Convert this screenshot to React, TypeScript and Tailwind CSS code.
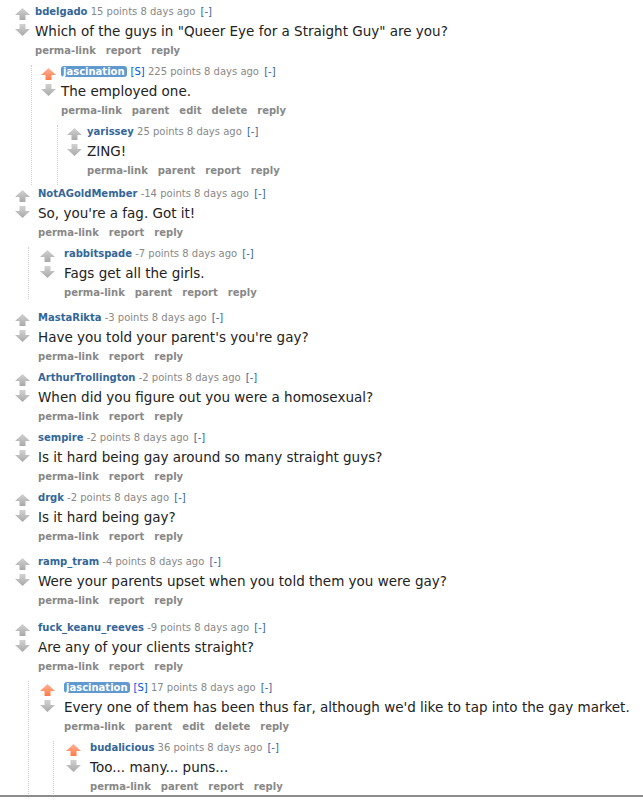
import React from "react";

type Item = {
  user: string;
  points: string;
  body: string;
  op?: boolean;
  up?: boolean;
  buttons?: string[];
  pb?: string;
  children?: Item[];
};

type Thread = { mt: string; tight?: boolean; item: Item };

const topButtons = ["perma-link", "report", "reply"];
const childButtons = ["perma-link", "parent", "report", "reply"];
const opButtons = ["perma-link", "parent", "edit", "delete", "reply"];

// the thread, top to bottom
const threads: Thread[] = [
  {
    mt: "mt-[5px]",
    tight: true,
    item: {
      user: "bdelgado",
      points: "15",
      body: 'Which of the guys in "Queer Eye for a Straight Guy" are you?',
      children: [
        {
          user: "jascination",
          op: true,
          up: true,
          points: "225",
          body: "The employed one.",
          children: [{ user: "yarissey", points: "25", body: "ZING!", pb: "pb-[8px]" }],
        },
      ],
    },
  },
  {
    mt: "mt-[2px]",
    item: {
      user: "NotAGoldMember",
      points: "-14",
      body: "So, you're a fag. Got it!",
      children: [{ user: "rabbitspade", points: "-7", body: "Fags get all the girls." }],
    },
  },
  { mt: "mt-[12px]", item: { user: "MastaRikta", points: "-3", body: "Have you told your parent's you're gay?" } },
  { mt: "mt-[8px]", item: { user: "ArthurTrollington", points: "-2", body: "When did you figure out you were a homosexual?" } },
  { mt: "mt-[8px]", item: { user: "sempire", points: "-2", body: "Is it hard being gay around so many straight guys?" } },
  { mt: "mt-[8px]", item: { user: "drgk", points: "-2", body: "Is it hard being gay?" } },
  { mt: "mt-[12px]", item: { user: "ramp_tram", points: "-4", body: "Were your parents upset when you told them you were gay?" } },
  {
    mt: "mt-[14px]",
    item: {
      user: "fuck_keanu_reeves",
      points: "-9",
      body: "Are any of your clients straight?",
      children: [
        {
          user: "jascination",
          op: true,
          up: true,
          points: "17",
          body: "Every one of them has been thus far, although we'd like to tap into the gay market.",
          children: [{ user: "budalicious", up: true, points: "36", body: "Too... many... puns...", pb: "pb-[1px]" }],
        },
      ],
    },
  },
];

function Arrow({ down, on }: { down?: boolean; on?: boolean }) {
  const id = `g-${down ? "d" : "u"}-${on ? "on" : "off"}`;
  const top = on ? "#ffb399" : "#d2d2d2";
  const bottom = on ? "#ff7a45" : "#a9a9a9";
  return (
    <svg width="15" height="12" viewBox="0 0 15 12" className="block">
      <defs>
        <linearGradient id={id} x1="0" y1={down ? "1" : "0"} x2="0" y2={down ? "0" : "1"}>
          <stop offset="0" stopColor={down ? bottom : top} />
          <stop offset="1" stopColor={down ? top : bottom} />
        </linearGradient>
      </defs>
      {down ? (
        <polygon points="4.5,0 10.5,0 10.5,5 15,5 7.5,12 0,5 4.5,5" fill={`url(#${id})`} />
      ) : (
        <polygon points="7.5,0 15,7 10.5,7 10.5,12 4.5,12 4.5,7 0,7" fill={`url(#${id})`} />
      )}
    </svg>
  );
}

function Comment({ c, depth, tight }: { c: Item; depth: number; tight?: boolean }) {
  const buttons = c.buttons ?? (depth === 0 ? topButtons : c.op ? opButtons : childButtons);
  return (
    <div>
      <div className={`flex ${tight ? "gap-[5px]" : depth === 0 ? "gap-[8px]" : "gap-[9px]"}`}>
        <div className="w-[15px] shrink-0 pt-[3px] flex flex-col gap-[4px]">
          <Arrow on={c.up} />
          <Arrow down />
        </div>
        <div className="min-w-0 flex-1">
          <div className="h-[14px] leading-[14px] text-[10px] text-[#888] whitespace-nowrap">
            {c.op ? (
              <span className="font-bold text-white bg-[#5f99cf] rounded-[3px] px-[2px]">{c.user}</span>
            ) : (
              <span className="font-bold text-[#369]">{c.user}</span>
            )}
            {c.op && <span className="text-[#0055df] ml-[4px]">[S]</span>}
            <span> {c.points} points 8 days ago </span>
            <span className="text-[#369] ml-[2px]">[-]</span>
          </div>
          <div className="h-[24px] leading-[25px] text-[13.5px] text-[#222] whitespace-nowrap">{c.body}</div>
          <div className="h-[14px] leading-[15px] flex gap-[10px] text-[10px] font-bold text-[#888]">
            {buttons.map((b) => (
              <span key={b}>{b}</span>
            ))}
          </div>
          {c.children?.map((k, i) => (
            <div
              key={i}
              className={`mt-[8px] border-l border-dotted border-[#c8c8f0] ${
                tight ? "ml-[-4px] pl-[9px]" : depth === 0 ? "ml-[-10px] pl-[11px]" : "ml-[-11px] pl-[12px]"
              } ${k.pb ?? ""}`}
            >
              <Comment c={k} depth={depth + 1} tight={tight} />
            </div>
          ))}
        </div>
      </div>
    </div>
  );
}

export default function App() {
  return (
    <div className="w-[643px] h-[806px] bg-white overflow-hidden font-['DejaVu_Sans',Verdana,sans-serif]">
      <div className="pl-[15px]">
        {threads.map((t, i) => (
          <div key={i} className={t.mt}>
            <Comment c={t.item} depth={0} tight={t.tight} />
          </div>
        ))}
      </div>
      <div className="mt-[1px] h-[2px] bg-[#8c8c8c]" />
    </div>
  );
}
